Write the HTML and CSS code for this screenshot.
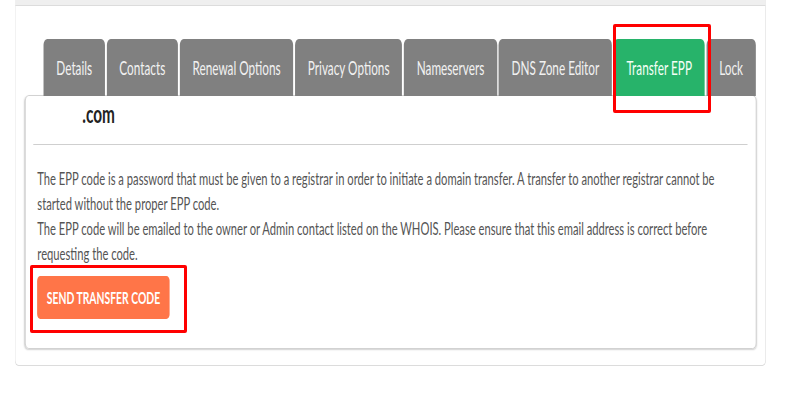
FILE: index.html
```html
<!DOCTYPE html>
<html lang="en">
<head>
<meta charset="utf-8">
<title>Transfer EPP</title>
<link rel="stylesheet" href="styles.css">
</head>
<body>
<div class="stage">
  <div class="outer">
    <div class="outer-head"></div>
    <div class="outer-body">
      <ul class="tabs">
        <li class="tab">Details</li>
        <li class="tab">Contacts</li>
        <li class="tab">Renewal Options</li>
        <li class="tab">Privacy Options</li>
        <li class="tab">Nameservers</li>
        <li class="tab">DNS Zone Editor</li>
        <li class="tab active">Transfer EPP</li>
        <li class="tab">Lock</li>
      </ul>
      <div class="card">
        <div class="domain">.com</div>
        <hr class="sep">
        <p class="desc">The EPP code is a password that must be given to a registrar in order to initiate a domain transfer. A transfer to another registrar cannot be started without the proper EPP code.<br>The EPP code will be emailed to the owner or Admin contact listed on the WHOIS. Please ensure that this email address is correct before requesting the code.</p>
        <button class="btn" type="button">Send Transfer Code</button>
      </div>
    </div>
  </div>
</div>
<div class="mark mark-tab"></div>
<div class="mark mark-btn"></div>
</body>
</html>
```

FILE: styles.css
```css
html, body {
  margin: 0;
  padding: 0;
  background: #fff;
  overflow: hidden;
}
body {
  position: relative;
  width: 793px;
  height: 398px;
  font-family: Lato, "Open Sans", sans-serif;
}
.stage {
  --k: 0.64;
  width: calc(780px / var(--k));
  transform: scaleX(var(--k));
  transform-origin: 0 0;
}
.outer {
  margin-left: calc(15px / var(--k));
  width: calc(751px / var(--k));
  height: 366px;
  box-sizing: border-box;
  border: 1px solid #dcdcdc;
  border-top: 0;
  border-left-width: calc(1px / var(--k));
  border-right-width: calc(1px / var(--k));
  border-radius: 0 0 6px 6px;
}
.outer-head {
  height: 5px;
  background: #efefef;
  border-bottom: 1px solid #dcdcdc;
}
.outer-body {
  padding: 33px calc(9px / var(--k)) 0 calc(9px / var(--k));
}
.tabs {
  list-style: none;
  margin: 0 0 0 calc(19px / var(--k));
  padding: 0;
  display: flex;
  gap: calc(1.8px / var(--k));
  height: 57px;
  position: relative;
  z-index: 1;
}
.tab {
  flex: 0 0 auto;
  white-space: nowrap;
  display: flex;
  align-items: center;
  padding: 0 calc(12.7px / var(--k));
  background: #808080;
  color: #f1f1f1;
  font-size: 18.4px;
  border-radius: 6px 6px 0 0;
}
.tab.active {
  background: #27b36a;
  color: #f4fff6;
}
.card {
  height: 254px;
  box-sizing: border-box;
  border: 1px solid #c8c8c8;
  border-left-width: calc(1px / var(--k));
  border-right-width: calc(1px / var(--k));
  border-radius: 6px;
  box-shadow: 0 1px 2px rgba(0,0,0,0.18);
  margin-top: -1px;
}
.domain {
  padding: 3px 0 0 calc(57px / var(--k));
  font-size: 24px;
  line-height: 30px;
  font-weight: 700;
  color: #222;
}
.sep {
  margin: 15px calc(8px / var(--k)) 0;
  border: 0;
  border-top: 1px solid #cfcfcf;
  height: 0;
}
.desc {
  margin: 21px 0 0;
  padding: 0 calc(16px / var(--k)) 0 calc(12px / var(--k));
  font-size: 17.5px;
  line-height: 25px;
  color: #555;
}
.btn {
  display: block;
  margin: 10px 0 0 calc(12px / var(--k));
  height: 43px;
  padding: 0 calc(9.5px / var(--k));
  border: 0;
  border-radius: 5px;
  background: #ff7548;
  color: #fff;
  font-family: Lato, "Open Sans", sans-serif;
  font-size: 16.2px;
  font-weight: 700;
  text-transform: uppercase;
}
.mark {
  position: absolute;
  box-sizing: border-box;
  border: 3px solid #f00;
  border-radius: 2px;
}
.mark-tab {
  left: 613px;
  top: 24px;
  width: 98px;
  height: 89px;
}
.mark-btn {
  left: 30px;
  top: 265px;
  width: 157px;
  height: 68px;
}
```
